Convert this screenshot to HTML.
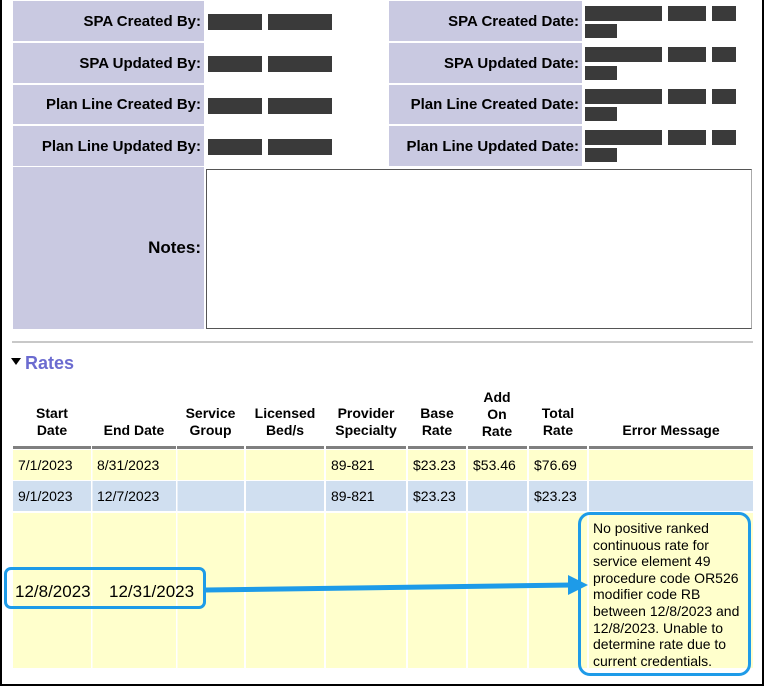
<!DOCTYPE html>
<html><head><meta charset="utf-8"><style>
*{margin:0;padding:0;box-sizing:border-box}
body{width:764px;height:686px;overflow:hidden;background:#fff;font-family:"Liberation Sans",Arial,sans-serif;position:relative;color:#000}
.frame{position:absolute;left:0;top:0;width:764px;height:686px;border:2px solid #000;border-top:none;z-index:20;pointer-events:none}
.a{position:absolute}
.lab{position:absolute;background:#c9c9e1;font-weight:bold;font-size:15px;text-align:right;padding-right:3px;display:flex;align-items:center;justify-content:flex-end}
.r{position:absolute;background:#3a3a3a}
.c{position:absolute;font-size:14px;display:flex;align-items:center;padding-left:5px}
.h{position:absolute;font-weight:bold;font-size:14px;text-align:center;line-height:17px}
</style></head><body>
<div class="frame"></div>
<div class="lab" style="left:13px;top:1px;width:191px;height:40px">SPA Created By:</div>
<div class="lab" style="left:13px;top:43px;width:191px;height:40px">SPA Updated By:</div>
<div class="lab" style="left:13px;top:85px;width:191px;height:39px">Plan Line Created By:</div>
<div class="lab" style="left:13px;top:126px;width:191px;height:40px">Plan Line Updated By:</div>
<div class="lab" style="left:389px;top:1px;width:193px;height:40px">SPA Created Date:</div>
<div class="lab" style="left:389px;top:43px;width:193px;height:40px">SPA Updated Date:</div>
<div class="lab" style="left:389px;top:85px;width:193px;height:39px">Plan Line Created Date:</div>
<div class="lab" style="left:389px;top:126px;width:193px;height:40px">Plan Line Updated Date:</div>
<div class="r" style="left:208px;top:14px;width:54px;height:16px"></div><div class="r" style="left:268px;top:14px;width:64px;height:16px"></div>
<div class="r" style="left:208px;top:56px;width:54px;height:16px"></div><div class="r" style="left:268px;top:56px;width:64px;height:16px"></div>
<div class="r" style="left:208px;top:98px;width:54px;height:16px"></div><div class="r" style="left:268px;top:98px;width:64px;height:16px"></div>
<div class="r" style="left:208px;top:139px;width:54px;height:16px"></div><div class="r" style="left:268px;top:139px;width:64px;height:16px"></div>
<div class="r" style="left:585px;top:6px;width:77px;height:15px"></div><div class="r" style="left:668px;top:6px;width:38px;height:15px"></div><div class="r" style="left:712px;top:6px;width:24px;height:15px"></div><div class="r" style="left:585px;top:24px;width:32px;height:14px"></div>
<div class="r" style="left:585px;top:47px;width:77px;height:15px"></div><div class="r" style="left:668px;top:47px;width:38px;height:15px"></div><div class="r" style="left:712px;top:47px;width:24px;height:15px"></div><div class="r" style="left:585px;top:66px;width:32px;height:14px"></div>
<div class="r" style="left:585px;top:89px;width:77px;height:15px"></div><div class="r" style="left:668px;top:89px;width:38px;height:15px"></div><div class="r" style="left:712px;top:89px;width:24px;height:15px"></div><div class="r" style="left:585px;top:107px;width:32px;height:14px"></div>
<div class="r" style="left:585px;top:130px;width:77px;height:15px"></div><div class="r" style="left:668px;top:130px;width:38px;height:15px"></div><div class="r" style="left:712px;top:130px;width:24px;height:15px"></div><div class="r" style="left:585px;top:148px;width:32px;height:14px"></div>
<div class="lab" style="left:13px;top:167px;width:191px;height:162px;font-size:17px">Notes:</div>
<div class="a" style="left:206px;top:169px;width:546px;height:160px;border:1px solid #555;border-right-color:#aaa;border-bottom-color:#555"></div>
<div class="a" style="left:12px;top:341px;width:741px;height:2px;background:#c8c8c8"></div>
<div class="a" style="left:11px;top:358px;width:0;height:0;border-left:5px solid transparent;border-right:5px solid transparent;border-top:7px solid #000"></div>
<div class="a" style="left:25px;top:353px;font-size:18px;font-weight:bold;color:#6b6bd0">Rates</div>
<div class="h" style="left:13px;top:405px;width:78px">Start<br>Date</div>
<div class="h" style="left:92px;top:422px;width:84px">End Date</div>
<div class="h" style="left:177px;top:405px;width:67px">Service<br>Group</div>
<div class="h" style="left:246px;top:405px;width:78px">Licensed<br>Bed/s</div>
<div class="h" style="left:326px;top:405px;width:80px">Provider<br>Specialty</div>
<div class="h" style="left:408px;top:405px;width:58px">Base<br>Rate</div>
<div class="h" style="left:468px;top:389px;width:58px">Add<br>On<br>Rate</div>
<div class="h" style="left:529px;top:405px;width:58px">Total<br>Rate</div>
<div class="h" style="left:589px;top:422px;width:164px">Error Message</div>
<svg class="a" style="left:0;top:446px" width="764" height="240">
<g fill="#808080">
<rect x="13" y="0" width="78" height="3"/><rect x="92" y="0" width="84" height="3"/><rect x="177" y="0" width="67" height="3"/><rect x="246" y="0" width="78" height="3"/><rect x="326" y="0" width="80" height="3"/><rect x="408" y="0" width="58" height="3"/><rect x="468" y="0" width="59" height="3"/><rect x="529" y="0" width="58" height="3"/><rect x="589" y="0" width="164" height="3"/>
</g>
<g>
<rect x="13" y="4" width="740" height="30" fill="#ffffcc"/>
<rect x="13" y="35" width="740" height="30" fill="#d0dff0"/>
<rect x="13" y="67" width="740" height="155" fill="#ffffcc"/>
</g>
<g fill="#fff">
<rect x="91" y="4" width="1.5" height="218"/><rect x="176" y="4" width="1.5" height="218"/><rect x="244" y="4" width="2" height="218"/><rect x="324" y="4" width="2" height="218"/><rect x="406" y="4" width="2" height="218"/><rect x="466" y="4" width="2" height="218"/><rect x="527" y="4" width="2" height="218"/><rect x="587" y="4" width="2" height="218"/>
<rect x="13" y="34" width="740" height="1"/><rect x="13" y="65" width="740" height="2"/>
</g>
</svg>
<div class="c" style="left:13px;top:450px;height:30px">7/1/2023</div>
<div class="c" style="left:92px;top:450px;height:30px">8/31/2023</div>
<div class="c" style="left:326px;top:450px;height:30px">89-821</div>
<div class="c" style="left:408px;top:450px;height:30px">$23.23</div>
<div class="c" style="left:468px;top:450px;height:30px">$53.46</div>
<div class="c" style="left:529px;top:450px;height:30px">$76.69</div>
<div class="c" style="left:13px;top:481px;height:30px">9/1/2023</div>
<div class="c" style="left:92px;top:481px;height:30px">12/7/2023</div>
<div class="c" style="left:326px;top:481px;height:30px">89-821</div>
<div class="c" style="left:408px;top:481px;height:30px">$23.23</div>
<div class="c" style="left:529px;top:481px;height:30px">$23.23</div>
<div class="a" style="left:4px;top:567px;width:202px;height:42px;border:3px solid #1e9be8;border-radius:7px"></div>
<div class="a" style="left:15px;top:582px;font-size:17px">12/8/2023</div>
<div class="a" style="left:109px;top:582px;font-size:17px">12/31/2023</div>
<svg class="a" style="left:200px;top:570px" width="400" height="40">
<line x1="6" y1="20" x2="372" y2="15" stroke="#1e9be8" stroke-width="5"/>
<polygon points="368,5 388,15 368,25" fill="#1e9be8"/>
</svg>
<div class="a" style="left:578px;top:512px;width:173px;height:164px;border:3px solid #1e9be8;border-radius:12px"></div>
<div class="a" style="left:593px;top:520px;width:160px;font-size:14px;line-height:16.6px">No positive ranked continuous rate for service element 49 procedure code OR526 modifier code RB between 12/8/2023 and 12/8/2023. Unable to determine rate due to current credentials.</div>
</body></html>
